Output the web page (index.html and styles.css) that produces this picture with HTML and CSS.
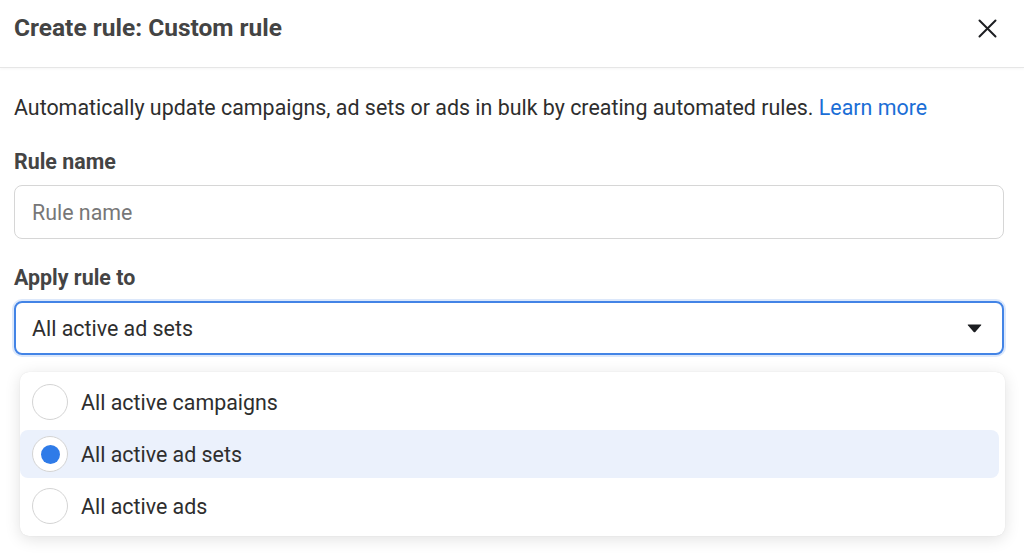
FILE: index.html
```html
<!DOCTYPE html>
<html lang="en">
<head>
  <meta charset="UTF-8">
  <meta name="viewport" content="width=device-width, initial-scale=1.0">
  <title>Create rule: Custom rule</title>
  <link rel="stylesheet" href="styles.css">
</head>
<body>
  <div class="dialog">
    <!-- Header -->
    <div class="dialog-header">
      <h1>Create rule: Custom rule</h1>
      <button class="close" aria-label="Close">
        <svg width="19" height="19" viewBox="0 0 19 19">
          <path d="M1.5 1.5 L17.5 17.5 M17.5 1.5 L1.5 17.5" stroke="#1c1e21" stroke-width="2" stroke-linecap="round"/>
        </svg>
      </button>
    </div>

    <!-- Body -->
    <div class="dialog-body">
      <p class="intro">Automatically update campaigns, ad sets or ads in bulk by creating automated rules. <a href="#">Learn more</a></p>

      <label class="field-label" for="rule-name">Rule name</label>
      <input type="text" id="rule-name" class="text-input" placeholder="Rule name">

      <div class="field-label">Apply rule to</div>
      <div class="select">
        <span>All active ad sets</span>
        <svg width="15" height="9" viewBox="0 0 15 9">
          <path d="M1.2 0.5 H13.8 Q14.8 0.5 14.1 1.3 L8.3 7.9 Q7.5 8.8 6.7 7.9 L0.9 1.3 Q0.2 0.5 1.2 0.5 Z" fill="#1c1e21"/>
        </svg>
      </div>

      <div class="menu">
        <div class="option">
          <span class="radio"></span>
          <span>All active campaigns</span>
        </div>
        <div class="option selected">
          <span class="radio"></span>
          <span>All active ad sets</span>
        </div>
        <div class="option">
          <span class="radio"></span>
          <span>All active ads</span>
        </div>
      </div>
    </div>
  </div>
</body>
</html>
```

FILE: styles.css
```css
body {
  font-family: Roboto, "Noto Sans", Arial, sans-serif;
  margin: 0;
  background: #fff;
  color: #1c1e21;
}

.dialog {
  width: 1024px;
  height: 553px;
  overflow: hidden;
}

.dialog-header {
  box-sizing: border-box;
  height: 68px;
  padding: 13px 27px 0 14px;
  display: flex;
  align-items: flex-start;
  justify-content: space-between;
  border-bottom: 1px solid #e6e6e6;
  box-shadow: 0 1px 3px rgba(0, 0, 0, 0.04);
}

h1 {
  font-size: 24.5px;
  line-height: 30px;
  font-weight: 700;
  color: #444;
  margin: 0;
}

.close {
  background: none;
  border: 0;
  padding: 0;
  margin-top: 6px;
  width: 19px;
  height: 19px;
  display: flex;
}

.dialog-body {
  padding: 27px 20px 0 14px;
}

.intro {
  margin: 0 0 28px;
  font-size: 21.4px;
  line-height: 26px;
  color: #2e2e2e;
}

.intro a {
  color: #1b6ed6;
  text-decoration: none;
}

.field-label {
  display: block;
  font-size: 21.4px;
  font-weight: 700;
  color: #444;
  line-height: 26px;
  margin-bottom: 10px;
}

.text-input {
  display: block;
  box-sizing: border-box;
  width: 100%;
  height: 54px;
  border: 1px solid #d6d6d6;
  border-radius: 8px;
  padding: 0 17px;
  font-family: inherit;
  font-size: 21.4px;
  margin: 0 0 26px;
  outline: none;
}

.text-input::placeholder {
  color: #777;
}

.select {
  box-sizing: border-box;
  height: 54px;
  border: 2px solid #4384e6;
  border-radius: 8px;
  box-shadow: 0 0 0 2px #dce8fb;
  padding: 0 20px 0 16px;
  display: flex;
  align-items: center;
  justify-content: space-between;
  font-size: 21.4px;
  color: #2e2e2e;
}

.menu {
  margin: 17px -1px 0 6px;
  background: #fff;
  border-radius: 9px;
  box-shadow: 0 3px 16px rgba(0, 0, 0, 0.12), 0 0 1px rgba(0, 0, 0, 0.12);
  padding: 6px 6px 6px 0;
  display: flex;
  flex-direction: column;
  gap: 4px;
}

.option {
  height: 48px;
  display: flex;
  align-items: center;
  gap: 13px;
  padding-left: 12px;
  border-radius: 8px;
  font-size: 21.4px;
  color: #2e2e2e;
}

.option.selected {
  background: #ebf1fc;
}

.radio {
  box-sizing: border-box;
  width: 36px;
  height: 36px;
  border: 1px solid #d4d4d4;
  border-radius: 50%;
  background: #fff;
  display: flex;
  align-items: center;
  justify-content: center;
}

.option.selected .radio::after {
  content: "";
  width: 19px;
  height: 19px;
  border-radius: 50%;
  background: #2f7be8;
}
```
